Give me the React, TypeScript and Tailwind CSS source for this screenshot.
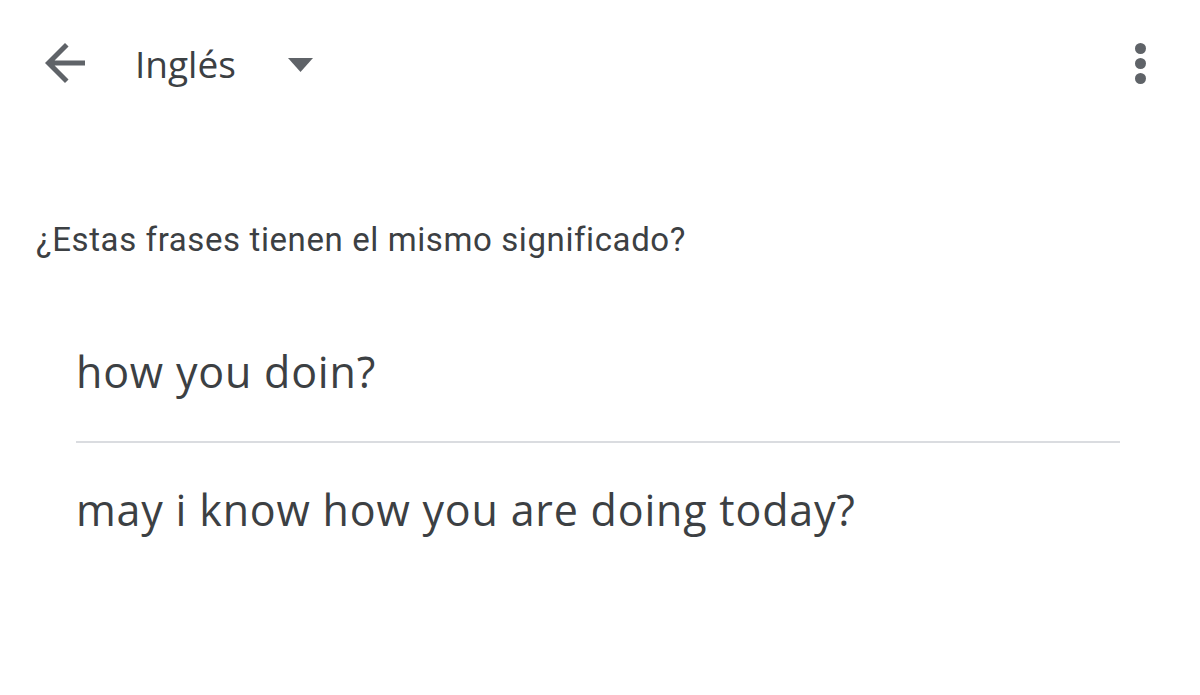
import React from "react";

const sans = { fontFamily: '"Open Sans", sans-serif' };

export default function App() {
  return (
    <div className="w-[1200px] h-[695px] bg-white overflow-hidden text-[#3c4043]">
      <div className="flex items-center h-[126px] pl-[35px] pr-[54px]">
        <svg width="60" height="60" viewBox="0 0 24 24">
          <path d="M20 11H7.83l5.59-5.59L12 4l-8 8 8 8 1.41-1.41L7.83 13H20v-2z" fill="#5f6368" />
        </svg>
        <span className="ml-[40px] text-[37px] leading-none" style={sans}>Inglés</span>
        <svg width="25" height="14" viewBox="0 0 25 14" className="ml-[52px] mt-[4px]">
          <path d="M0 0h25L12.5 14z" fill="#5f6368" />
        </svg>
        <div className="ml-auto flex flex-col gap-[4px]">
          <div className="w-[11px] h-[11px] rounded-full bg-[#5f6368]" />
          <div className="w-[11px] h-[11px] rounded-full bg-[#5f6368]" />
          <div className="w-[11px] h-[11px] rounded-full bg-[#5f6368]" />
        </div>
      </div>
      <div className="pl-[36px] mt-[97px] text-[33px] leading-none tracking-[0.6px]" style={{ fontFamily: 'Roboto, sans-serif' }}>
        ¿Estas frases tienen el mismo significado?
      </div>
      <div className="pl-[76px] pr-[80px] mt-[94px]" style={sans}>
        <div className="text-[43px] leading-none tracking-[0.8px]">how you doin?</div>
        <div className="h-[2px] bg-[#dadce0] mt-[48px]" />
        <div className="text-[43px] leading-none tracking-[0.8px] mt-[45px]">may i know how you are doing today?</div>
      </div>
    </div>
  );
}
